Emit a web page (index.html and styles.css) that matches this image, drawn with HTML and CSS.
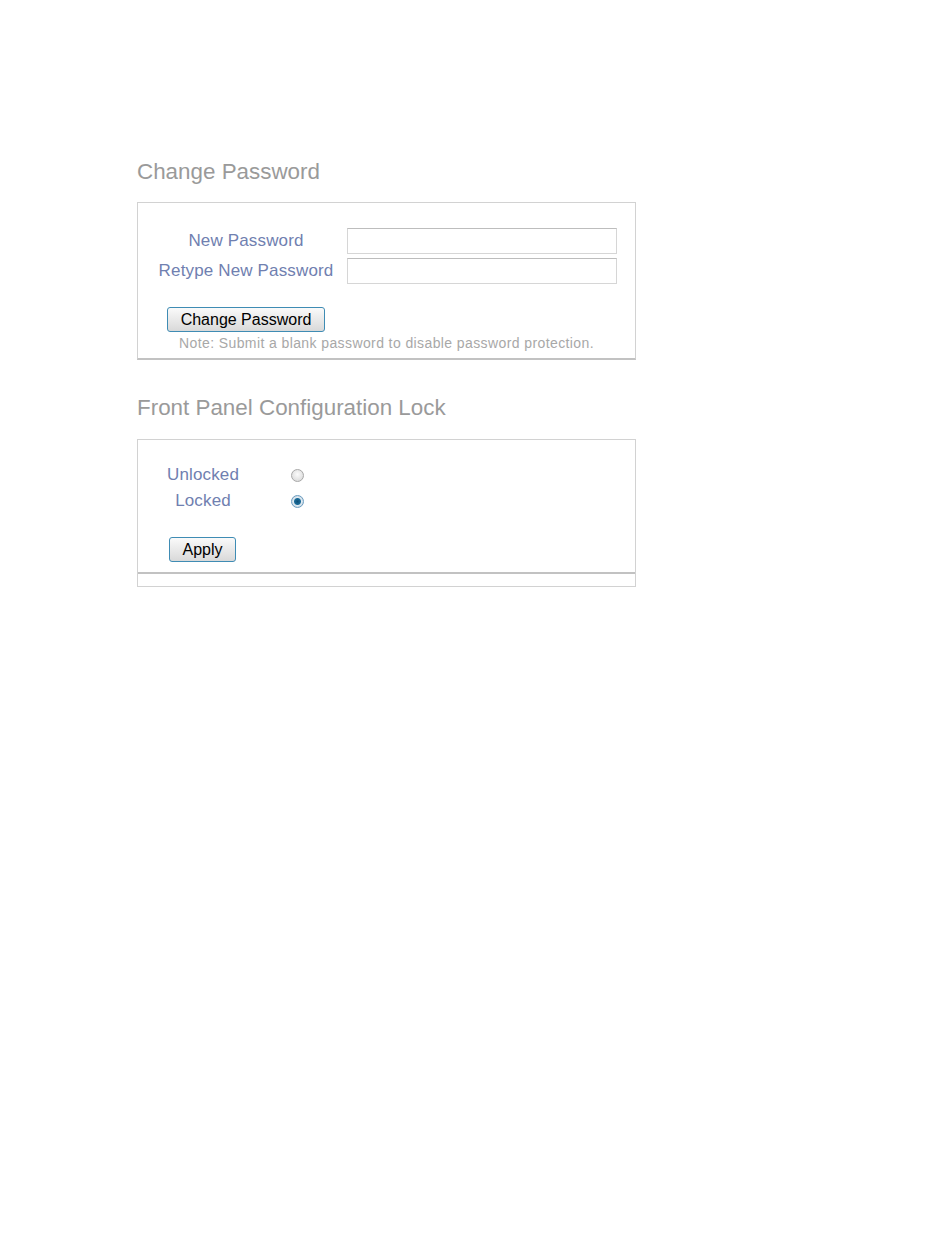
FILE: index.html
```html
<!DOCTYPE html>
<html lang="en">
<head>
    <meta charset="UTF-8">
    <title>Device Settings</title>
    <link rel="stylesheet" href="styles.css">
</head>
<body>
    <div class="page">
        <h2 class="section-title first">Change Password</h2>
        <form class="panel panel-password" id="passwordForm">
            <div class="form-grid">
                <label for="newPass">New Password</label>
                <input type="password" id="newPass" name="newPass">

                <label for="retypePass">Retype New Password</label>
                <input type="password" id="retypePass" name="retypePass">
            </div>
            <button type="submit" class="btn btn-change">Change Password</button>
            <p class="note">Note: Submit a blank password to disable password protection.</p>
        </form>

        <h2 class="section-title">Front Panel Configuration Lock</h2>
        <form class="panel panel-lock" id="lockForm">
            <div class="panel-body">
                <div class="radio-grid">
                    <label for="unlocked">Unlocked</label>
                    <input type="radio" id="unlocked" name="lock" value="0">

                    <label for="locked">Locked</label>
                    <input type="radio" id="locked" name="lock" value="1" checked>
                </div>
                <button type="submit" class="btn btn-apply">Apply</button>
            </div>
            <div class="panel-foot"></div>
        </form>
    </div>
</body>
</html>
```

FILE: styles.css
```css
body {
    margin: 0;
    font-family: 'Liberation Sans', Arial, sans-serif;
    background: #fff;
}

.page {
    width: 499px;
    padding: 159px 0 0 137px;
}

.section-title {
    margin: 35px 0 18px;
    font-size: 22.4px;
    line-height: 26px;
    font-weight: normal;
    color: #9a9a9a;
}

.section-title.first {
    margin-top: 0;
    margin-bottom: 17px;
}

.panel {
    margin: 0;
    border: 1px solid #d2d2d2;
}

.panel-password {
    padding: 25px 13px 7px;
    border-bottom: 2px solid #c2c2c2;
}

.form-grid {
    display: grid;
    grid-template-columns: 190px 270px;
    column-gap: 6px;
    row-gap: 4px;
    align-items: center;
}

.form-grid label,
.radio-grid label {
    font-size: 17px;
    letter-spacing: 0.15px;
    color: #7080b0;
    text-align: center;
}

.form-grid input {
    width: 270px;
    height: 26px;
    margin: 0;
    box-sizing: border-box;
    border: 1px solid #d6d6d6;
    border-top-color: #bdbdbd;
    background: #fff;
}

.btn {
    display: block;
    height: 25px;
    padding: 0;
    font-family: 'Liberation Sans', Arial, sans-serif;
    font-size: 16px;
    color: #000;
    border: 1px solid #3f8cb4;
    border-radius: 3px;
    background: linear-gradient(#fafafa, #d9d9d9);
    cursor: pointer;
}

.btn-change {
    width: 158px;
    margin: 23px 0 0 16px;
}

.note {
    margin: 3px 0 0;
    font-size: 14px;
    line-height: 16px;
    letter-spacing: 0.4px;
    color: #a8a8a8;
    text-align: center;
}

.panel-body {
    padding: 22px 13px 10px;
    border-bottom: 2px solid #c2c2c2;
}

.radio-grid {
    display: grid;
    grid-template-columns: 104px 13px;
    grid-auto-rows: 26px;
    column-gap: 36px;
    align-items: center;
}

.radio-grid input {
    appearance: none;
    width: 13px;
    height: 13px;
    margin: 0;
    border: 1px solid #a8a8a8;
    border-radius: 50%;
    background: radial-gradient(circle at 50% 40%, #fbfbfb, #d4d4d4);
}

.radio-grid input:checked {
    border-color: #6a9cc0;
    background: radial-gradient(circle, #0d4f78 0, #1b6c99 3px, #dfeaf2 4px, #c9d6e0 6px);
}

.btn-apply {
    width: 67px;
    margin: 23px 0 0 18px;
}

.panel-foot {
    height: 12px;
}
```
